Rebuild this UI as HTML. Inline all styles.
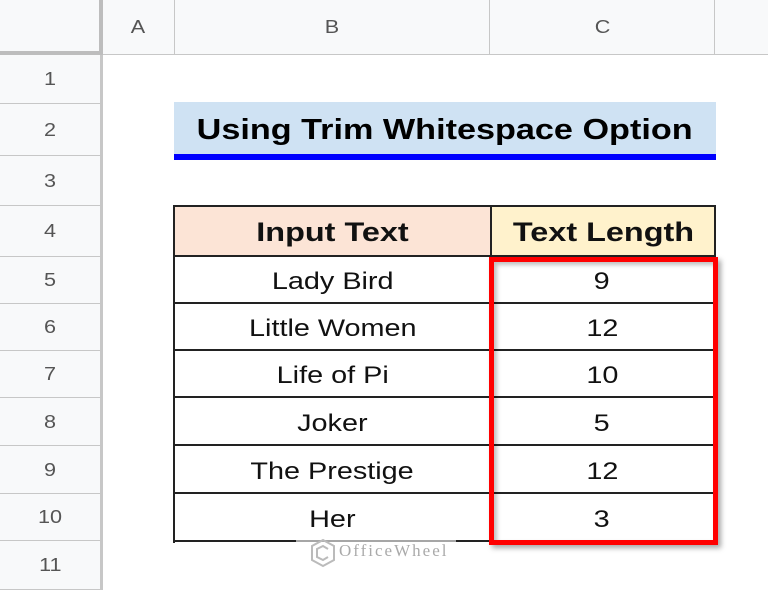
<!DOCTYPE html>
<html><head><style>
body{margin:0;width:768px;height:590px;overflow:hidden;background:#fff;font-family:"Liberation Sans",Arial,sans-serif;position:relative}
div{position:absolute;box-sizing:border-box}
span{display:inline-block;transform:scaleX(1.2)}
.ch{top:0;height:55px;background:#f8f9fa;border-right:1px solid #c7c7c7;border-bottom:1px solid #c7c7c7;color:#555;font-size:18px;text-align:center;line-height:54px}
.rh{left:0;width:100px;background:#f8f9fa;border-bottom:1px solid #c7c7c7;color:#555;font-size:18px;text-align:center}
.c{font-size:24px;color:#111;text-align:center;border-bottom:2px solid #222}
</style></head><body>
<div class="ch" style="left:0;width:103px;border-right:4px solid #bdbdbd;border-bottom:4px solid #bdbdbd;height:55px"></div>
<div class="ch" style="left:103px;width:72px"><span>A</span></div>
<div class="ch" style="left:175px;width:315px"><span>B</span></div>
<div class="ch" style="left:490px;width:225px"><span>C</span></div>
<div class="ch" style="left:715px;width:53px;border-right:none"></div>
<div style="left:100px;top:55px;width:3px;height:535px;background:#c7c7c7"></div>
<div class="rh" style="top:55px;height:49px;line-height:49px"><span>1</span></div>
<div class="rh" style="top:104px;height:52px;line-height:52px"><span>2</span></div>
<div class="rh" style="top:156px;height:50px;line-height:50px"><span>3</span></div>
<div class="rh" style="top:206px;height:51px;line-height:51px"><span>4</span></div>
<div class="rh" style="top:257px;height:47px;line-height:47px"><span>5</span></div>
<div class="rh" style="top:304px;height:47px;line-height:47px"><span>6</span></div>
<div class="rh" style="top:351px;height:47px;line-height:47px"><span>7</span></div>
<div class="rh" style="top:398px;height:48px;line-height:48px"><span>8</span></div>
<div class="rh" style="top:446px;height:48px;line-height:48px"><span>9</span></div>
<div class="rh" style="top:494px;height:47px;line-height:47px"><span>10</span></div>
<div class="rh" style="top:541px;height:49px;line-height:49px"><span>11</span></div>

<div style="left:174px;top:102px;width:542px;height:52px;background:#cfe2f3;font-size:28.5px;font-weight:bold;color:#000;text-align:center;line-height:56px"><span>Using Trim Whitespace Option</span></div>
<div style="left:174px;top:154px;width:542px;height:6px;background:#0000ff"></div>

<div style="left:173px;top:205px;width:543px;height:338px;border:2px solid #222;border-bottom:none"></div>
<div class="c" style="left:175px;top:207px;width:315px;height:50px;background:#fce4d6;font-weight:bold;font-size:27px;line-height:50px"><span>Input Text</span></div>
<div class="c" style="left:490px;top:207px;width:224px;height:50px;background:#fff2cc;font-weight:bold;font-size:27px;line-height:50px;border-left:2px solid #222"><span>Text Length</span></div>

<div class="c" style="left:175px;top:257px;width:315px;height:47px;line-height:50px"><span>Lady Bird</span></div>
<div class="c" style="left:175px;top:304px;width:315px;height:47px;line-height:50px"><span>Little Women</span></div>
<div class="c" style="left:175px;top:351px;width:315px;height:47px;line-height:50px"><span>Life of Pi</span></div>
<div class="c" style="left:175px;top:398px;width:315px;height:48px;line-height:51px"><span>Joker</span></div>
<div class="c" style="left:175px;top:446px;width:315px;height:48px;line-height:51px"><span>The Prestige</span></div>
<div class="c" style="left:175px;top:494px;width:315px;height:48px;line-height:51px"><span>Her</span></div>

<div class="c" style="left:490px;top:257px;width:224px;height:47px;line-height:50px"><span>9</span></div>
<div class="c" style="left:490px;top:304px;width:224px;height:47px;line-height:50px"><span>12</span></div>
<div class="c" style="left:490px;top:351px;width:224px;height:47px;line-height:50px"><span>10</span></div>
<div class="c" style="left:490px;top:398px;width:224px;height:48px;line-height:51px"><span>5</span></div>
<div class="c" style="left:490px;top:446px;width:224px;height:48px;line-height:51px"><span>12</span></div>
<div class="c" style="left:490px;top:494px;width:224px;height:48px;line-height:51px;border-bottom:none"><span>3</span></div>

<div style="left:489px;top:257px;width:229px;height:288px;border:5px solid #ff0000;box-shadow:3px 3px 5px rgba(0,0,0,.35), inset 3px 3px 4px rgba(0,0,0,.25)"></div>

<div style="left:296px;top:533px;width:160px;height:36px;background:rgba(255,255,255,.6)"></div>
<svg style="position:absolute;left:310px;top:538px" width="26" height="30" viewBox="0 0 26 30"><path d="M13 2 L24 8 V22 L13 28 L2 22 V8 Z" fill="none" stroke="#bbb" stroke-width="2"/><path d="M18 11 L13 8 L7 11 V19 L13 22 L18 19" fill="none" stroke="#bbb" stroke-width="2"/></svg>
<div style="left:339px;top:541px;font-family:'Liberation Serif',serif;font-size:17px;color:#aaa;letter-spacing:2px">OfficeWheel</div>
</body></html>
